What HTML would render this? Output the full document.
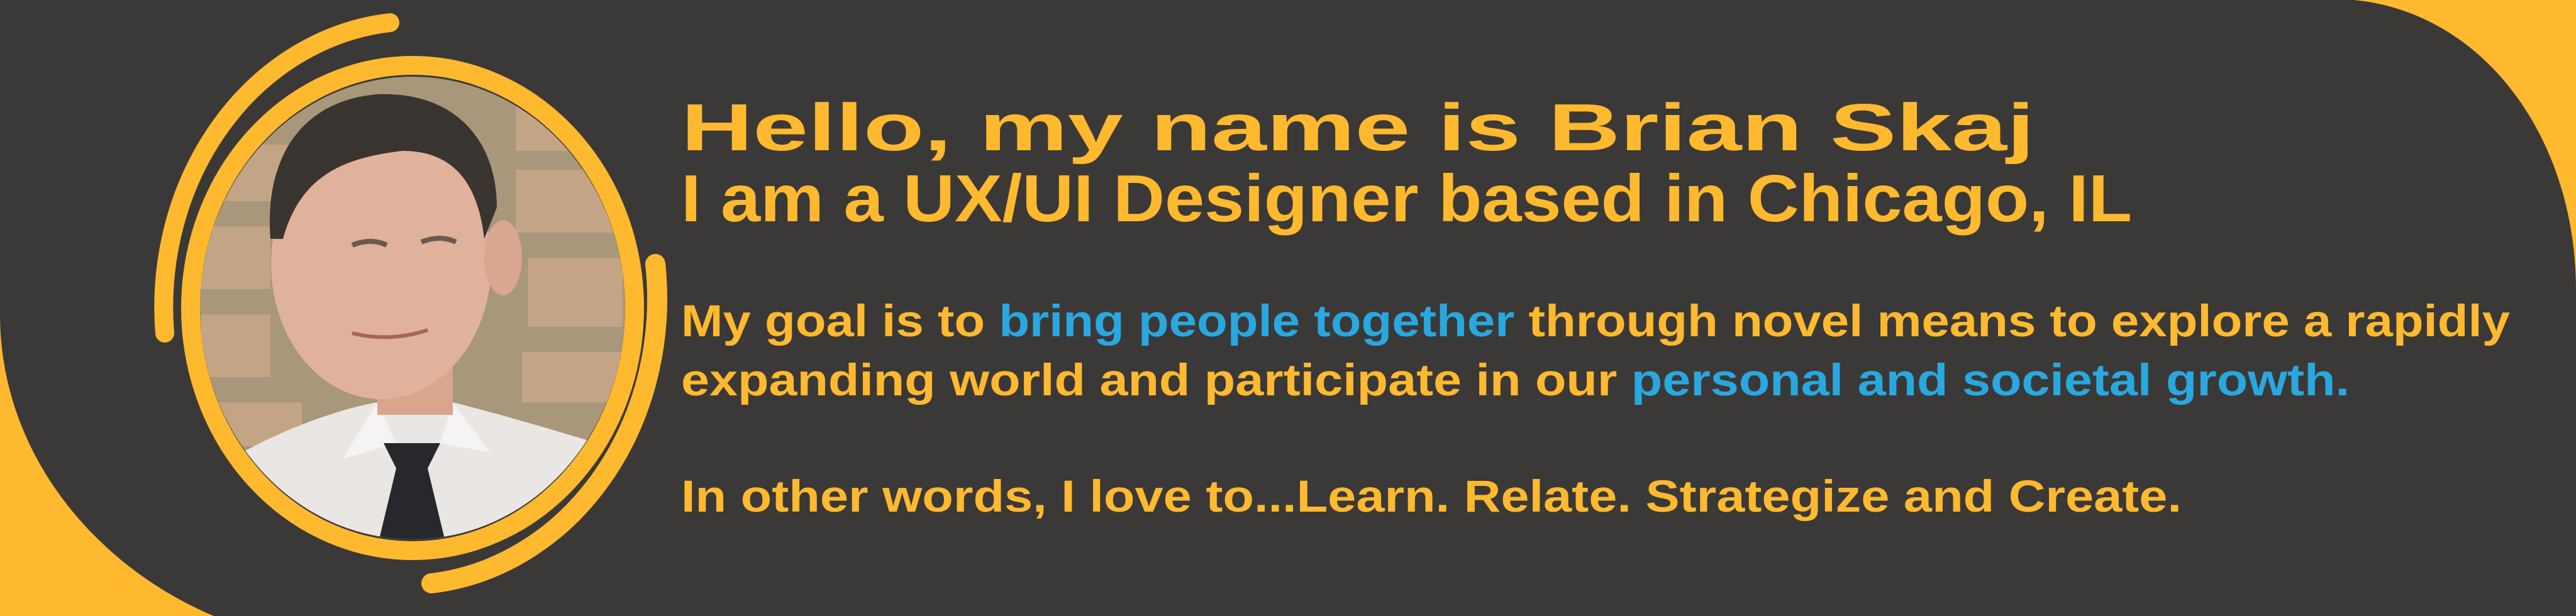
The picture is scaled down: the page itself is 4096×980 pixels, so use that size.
<!DOCTYPE html>
<html><head><meta charset="utf-8"><style>
html,body{margin:0;padding:0;width:4096px;height:980px;overflow:hidden;background:#ffb92f}
svg{display:block}
text{font-family:"Liberation Sans",sans-serif;font-weight:bold}
</style></head><body>
<svg width="4096" height="980" viewBox="0 0 4096 980" xmlns="http://www.w3.org/2000/svg">
<rect width="4096" height="980" fill="#ffb92f"/>
<path d="M0,0 H3743 C3950,20 4096,220 4096,462 V980 H340 C150,900 0,720 0,500 Z" fill="#3b3938"/>
<defs><clipPath id="ph"><ellipse cx="656" cy="490" rx="338" ry="368"/></clipPath></defs>
<!-- ring -->
<ellipse cx="656" cy="490" rx="353" ry="386" fill="none" stroke="#ffb92f" stroke-width="30"/>
<!-- photo approximation -->
<g clip-path="url(#ph)">
<rect x="300" y="100" width="720" height="800" fill="#a8977a"/>
<g fill="#c9a98a" opacity="0.8">
<rect x="310" y="230" width="150" height="90"/><rect x="310" y="360" width="120" height="100"/><rect x="320" y="500" width="110" height="100"/>
<rect x="820" y="150" width="160" height="90"/><rect x="820" y="270" width="160" height="100"/><rect x="840" y="410" width="150" height="110"/><rect x="830" y="560" width="160" height="80"/>
<rect x="330" y="640" width="150" height="70"/>
</g>
<path d="M320,760 C420,690 540,650 600,640 L720,640 C800,660 900,690 1000,720 L1000,900 L320,900 Z" fill="#e9e6e3"/>
<path d="M600,640 L545,730 L630,705 Z M720,640 L780,720 L700,705 Z" fill="#f6f4f2"/>
<path d="M610,705 L700,705 L680,745 L710,870 L600,870 L630,745 Z" fill="#26282b"/>
<rect x="600" y="560" width="120" height="100" fill="#d9a58c"/>
<ellipse cx="606" cy="420" rx="175" ry="215" fill="#e0b19b"/>
<ellipse cx="800" cy="410" rx="30" ry="60" fill="#d9a690"/>
<path d="M430,380 C420,250 480,160 600,150 C720,145 790,220 790,330 L770,380 C760,290 720,240 640,240 C560,250 480,270 450,380 Z" fill="#3a3430"/>
<path d="M560,390 q30,-12 55,0 M670,385 q30,-12 55,0" stroke="#6a5a4e" stroke-width="8" fill="none"/>
<path d="M560,530 q60,15 120,-5" stroke="#a5675a" stroke-width="6" fill="none"/>
</g>
<!-- outer arcs -->
<path d="M620,36 A400 455 0 0 0 262,530" fill="none" stroke="#ffb92f" stroke-width="30" stroke-linecap="round"/>
<path d="M1042,420 A400 455 0 0 1 686,928" fill="none" stroke="#ffb92f" stroke-width="32" stroke-linecap="round"/>
<!-- text -->
<g fill="#ffb92f">
<text x="1083" y="239" font-size="106" textLength="2152" lengthAdjust="spacingAndGlyphs">Hello, my name is Brian Skaj</text>
<text x="1083" y="352" font-size="106" textLength="2307" lengthAdjust="spacingAndGlyphs">I am a UX/UI Designer based in Chicago, IL</text>
<text x="1083" y="535" font-size="71" textLength="2908" lengthAdjust="spacingAndGlyphs">My goal is to <tspan fill="#29a8e0">bring people together</tspan> through novel means to explore a rapidly</text>
<text x="1083" y="629" font-size="71" textLength="2653" lengthAdjust="spacingAndGlyphs">expanding world and participate in our <tspan fill="#29a8e0">personal and societal growth.</tspan></text>
<text x="1083" y="814" font-size="71" textLength="2386" lengthAdjust="spacingAndGlyphs">In other words, I love to...Learn. Relate. Strategize and Create.</text>
</g>
</svg>
</body></html>
